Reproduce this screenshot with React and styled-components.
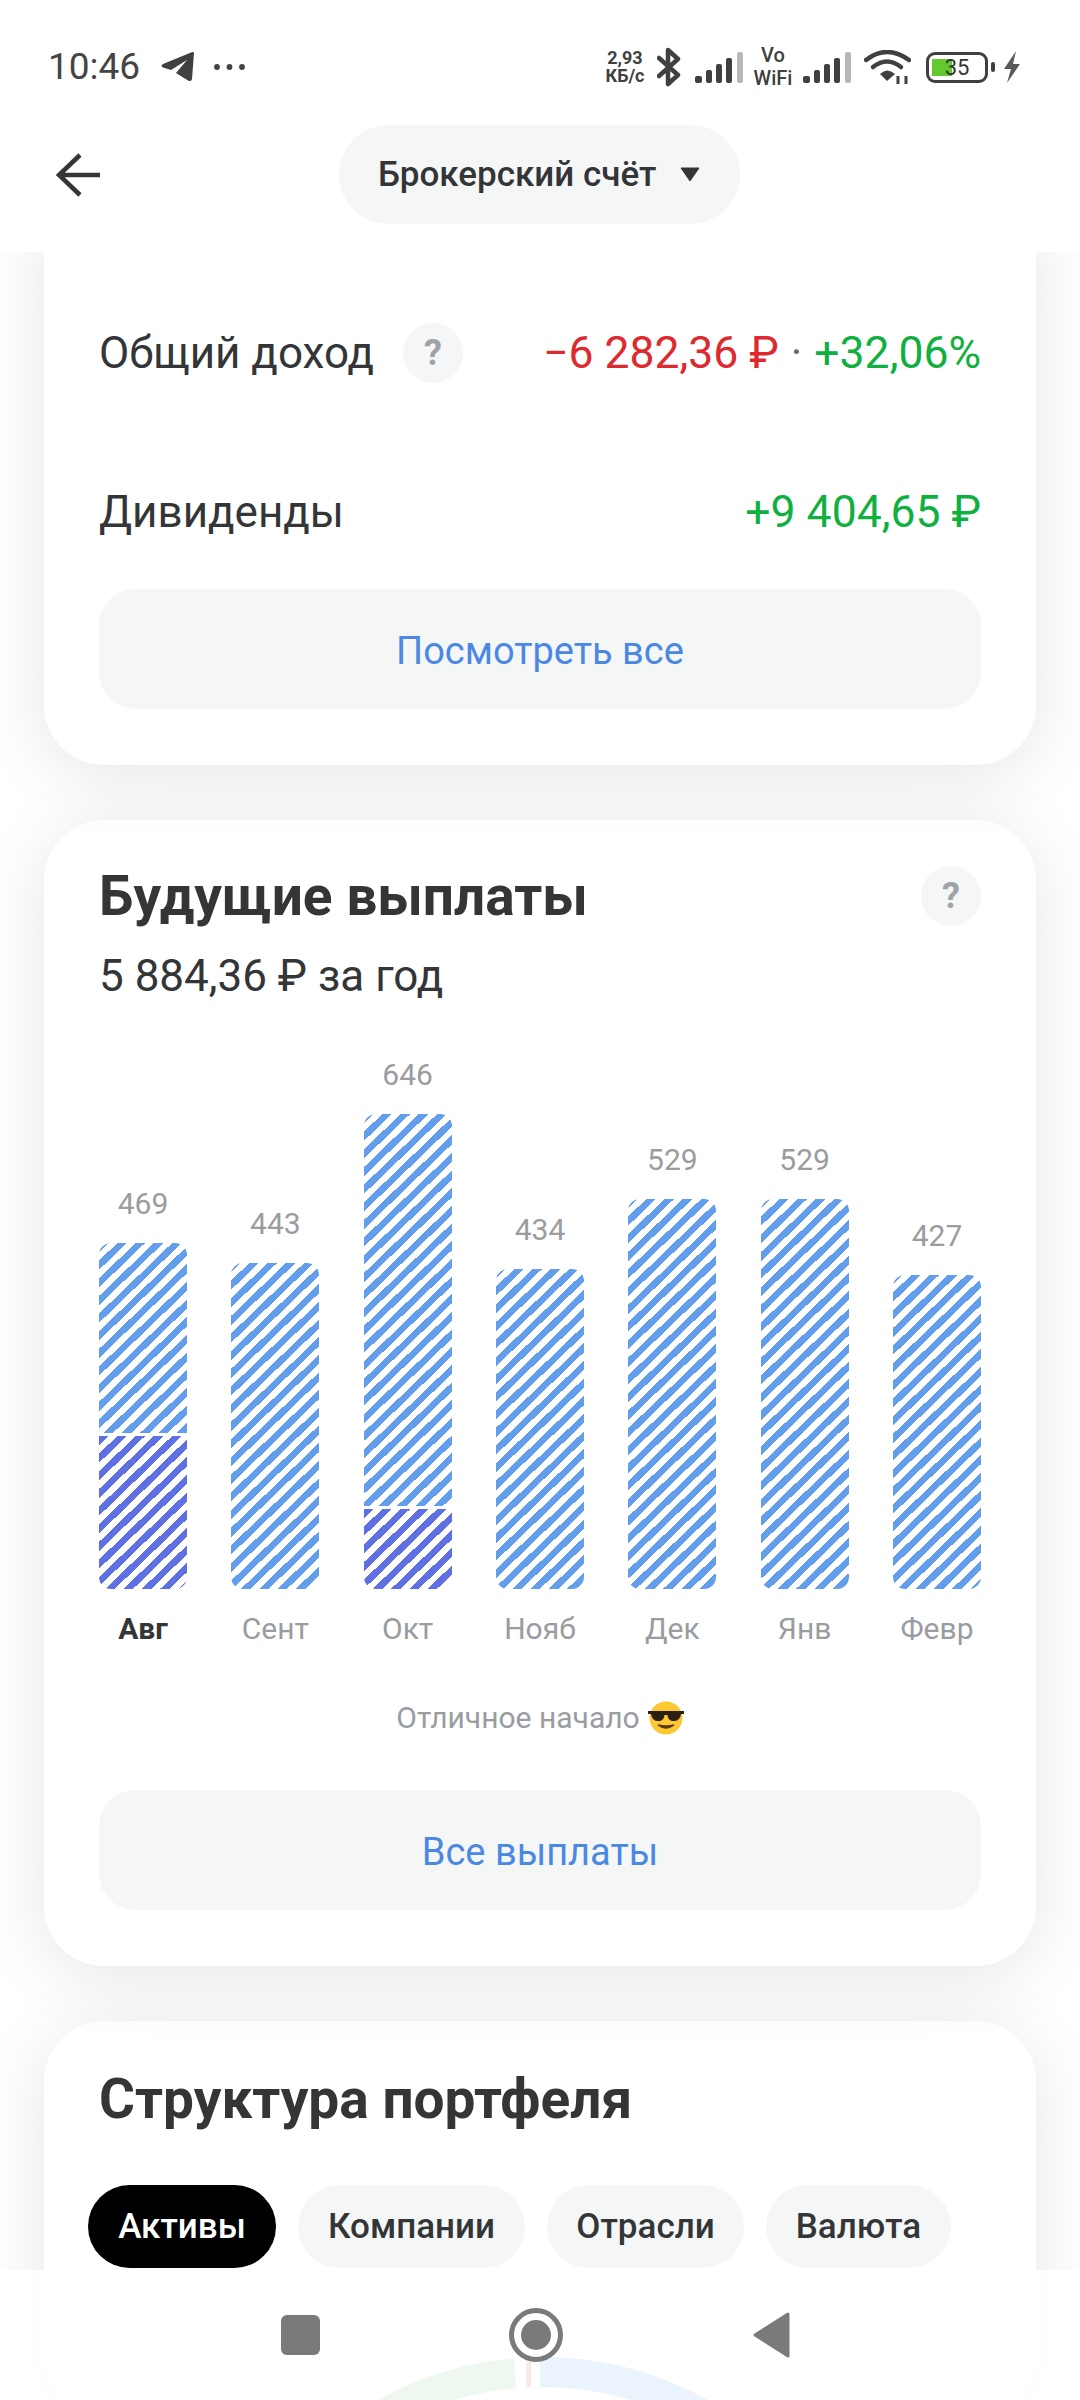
import React from 'react';
import styled, { createGlobalStyle } from 'styled-components';

const GlobalStyle = createGlobalStyle`
    html, body {
        margin: 0;
        padding: 0;
        background: #fff;
    }
    * {
        box-sizing: border-box;
    }
`;

const Screen = styled.div`
    position: relative;
    display: flex;
    flex-direction: column;
    width: 1080px;
    height: 2400px;
    overflow: hidden;
    background: #fff;
    font-family: Roboto, 'Noto Sans', sans-serif;
    color: #333537;
`;

const TopArea = styled.header`
    position: relative;
    z-index: 2;
    flex: none;
    height: 252px;
    background: #fff;
`;

const StatusBar = styled.div`
    display: flex;
    justify-content: space-between;
    align-items: center;
    height: 66px;
    margin-top: 34px;
    padding: 0 59px 0 48px;
`;

const StatusLeft = styled.div`
    display: flex;
    align-items: center;
`;

const Time = styled.span`
    font-size: 37px;
    font-weight: 400;
    color: #444;
    line-height: 40px;
    margin-right: 21px;
`;

const StatusRight = styled.div`
    display: flex;
    align-items: center;
    color: #404040;
`;

const Speed = styled.div`
    display: flex;
    flex-direction: column;
    align-items: center;
    width: 42px;
    margin-right: 11px;
    font-size: 18px;
    font-weight: 700;
    line-height: 18px;
`;

const VoWifi = styled.div`
    display: flex;
    flex-direction: column;
    align-items: center;
    width: 44px;
    margin: 0 8px;
    font-size: 20px;
    font-weight: 500;
    line-height: 23px;
`;

const Battery = styled.div`
    position: relative;
    display: flex;
    align-items: center;
    justify-content: center;
    width: 62px;
    height: 31px;
    margin: 0 3px 0 15px;
    border: 3px solid #404040;
    border-radius: 9px;
    font-size: 22px;
    color: #333;
    background: linear-gradient(90deg, #63c92f 0 20px, transparent 20px) no-repeat 3px 4px / 20px 17px;
`;

const BatteryNub = styled.div`
    width: 4px;
    height: 10px;
    margin-right: 8px;
    border-radius: 2px;
    background: #404040;
`;

const NavRow = styled.div`
    display: grid;
    grid-template-columns: 339px auto;
    align-items: center;
    height: 99px;
    margin-top: 25px;
    padding: 0;
`;

const BackButton = styled.div`
    display: flex;
    padding-left: 56px;
`;

const AccountPill = styled.div`
    display: flex;
    align-items: center;
    justify-content: space-between;
    width: 401px;
    height: 99px;
    padding: 0 40px 0 39px;
    border-radius: 50px;
    background: #f5f7f7;
    font-size: 35px;
    font-weight: 500;
`;

const Scroller = styled.main`
    flex: 1;
    min-height: 0;
    overflow: hidden;
`;

const Track = styled.div`
    position: relative;
    z-index: 0;
    display: flex;
    flex-direction: column;
    gap: 55px;
    margin-top: -60px;
    padding: 0 44px;
`;

const Card = styled.section`
    position: relative;
    z-index: ${(props) => props.$z};
    padding: ${(props) => props.$pad || '46px 55px 56px'};
    border-radius: 60px;
    background: #fff;
    box-shadow: 0 10px 70px rgba(0, 0, 0, 0.1);
`;

const SummaryRow = styled.div`
    display: flex;
    align-items: center;
    justify-content: space-between;
    height: 60px;
    margin-bottom: ${(props) => props.$mb}px;
    font-size: 44px;
`;

const RowLabel = styled.div`
    display: flex;
    align-items: center;
    gap: 29px;
`;

const Amount = styled.span`
    font-size: 44.5px;
    color: ${(props) => props.$color};
`;

const Dot = styled.span`
    margin: 0 12px;
    color: #666;
`;

const HelpBubble = styled.span`
    display: flex;
    align-items: center;
    justify-content: center;
    width: 60px;
    height: 60px;
    border-radius: 50%;
    background: #f5f7f7;
    color: #9fa3a8;
    font-size: 36px;
    font-weight: 700;
`;

const ActionButton = styled.div`
    display: flex;
    align-items: center;
    justify-content: center;
    height: 120px;
    margin-top: ${(props) => props.$mt}px;
    padding-top: 3px;
    border-radius: 36px;
    background: #f5f7f7;
    color: #4b88e4;
    font-size: 38px;
`;

const TitleRow = styled.div`
    display: flex;
    align-items: center;
    justify-content: space-between;
    height: 60px;
`;

const Title = styled.h2`
    margin: 0;
    font-size: 55px;
    font-weight: 700;
    line-height: 60px;
    color: #333537;
`;

const Subtitle = styled.div`
    margin-top: 20px;
    font-size: 44px;
    line-height: 60px;
`;

const Chart = styled.div`
    display: flex;
    justify-content: space-between;
    align-items: flex-end;
    margin-top: 60px;
    height: 523px;
`;

const Column = styled.div`
    display: flex;
    flex-direction: column;
    align-items: stretch;
    width: 88px;
`;

const BarValue = styled.div`
    margin-bottom: 21px;
    text-align: center;
    font-size: 30px;
    line-height: 36px;
    color: #999ca0;
`;

const Bar = styled.div`
    display: flex;
    flex-direction: column;
    gap: 3px;
    overflow: hidden;
    border-radius: 12px;
`;

const Segment = styled.div`
    flex: ${(props) => (props.$paid ? 'none' : 1)};
    background: repeating-linear-gradient(
        136deg,
        ${(props) => (props.$paid ? '#5f70e2' : '#629eec')} 0 6.6px,
        #fff 6.6px 12.7px
    );
`;

const Months = styled.div`
    display: flex;
    justify-content: space-between;
    margin-top: 20px;
`;

const Month = styled.div`
    width: 88px;
    text-align: center;
    white-space: nowrap;
    font-size: 30px;
    line-height: 40px;
    font-weight: ${(props) => (props.$active ? 700 : 400)};
    color: ${(props) => (props.$active ? '#333537' : '#999ca0')};
`;

const Note = styled.div`
    display: flex;
    align-items: center;
    justify-content: center;
    gap: 8px;
    margin-top: 49px;
    font-size: 30px;
    line-height: 40px;
    color: #999ca0;
`;

const Tabs = styled.div`
    display: flex;
    gap: 22px;
    margin: 56px 0 0 -11px;
`;

const Tab = styled.div`
    display: flex;
    align-items: center;
    justify-content: center;
    width: ${(props) => props.$w}px;
    height: 83px;
    border-radius: 42px;
    font-size: 35px;
    font-weight: 500;
    background: ${(props) => (props.$active ? '#000' : '#f5f7f7')};
    color: ${(props) => (props.$active ? '#fff' : '#333537')};
`;

const Donut = styled.svg`
    display: block;
    margin: 87px 0 0 201px;
`;

const SystemNav = styled.nav`
    position: absolute;
    z-index: 3;
    left: 0;
    right: 0;
    bottom: 0;
    display: flex;
    align-items: center;
    height: 130px;
    padding-left: 281px;
    background: rgba(255, 255, 255, 0.9);
`;

const NavSquare = styled.div`
    width: 39px;
    height: 40px;
    border-radius: 6px;
    background: #7a7a7a;
`;

const NavCircle = styled.div`
    display: flex;
    align-items: center;
    justify-content: center;
    width: 54px;
    height: 54px;
    margin: 0 190px 0 189px;
    border: 5px solid #7a7a7a;
    border-radius: 50%;

    &::after {
        content: '';
        width: 30px;
        height: 30px;
        border-radius: 50%;
        background: #7a7a7a;
    }
`;

const bars = [
    { value: 469, month: 'Авг', height: 346, paid: 153, active: true },
    { value: 443, month: 'Сент', height: 326 },
    { value: 646, month: 'Окт', height: 475, paid: 80 },
    { value: 434, month: 'Нояб', height: 320 },
    { value: 529, month: 'Дек', height: 390 },
    { value: 529, month: 'Янв', height: 390 },
    { value: 427, month: 'Февр', height: 314 },
];

const Signal = () => (
    <svg width='48' height='32' viewBox='0 0 48 32'>
        <rect x='0' y='25' width='7' height='7' rx='2' fill='#404040' />
        <rect x='11' y='19' width='6' height='13' rx='2' fill='#404040' />
        <rect x='21' y='13' width='6' height='19' rx='2' fill='#404040' />
        <rect x='31' y='7' width='6' height='25' rx='2' fill='#404040' />
        <rect x='42' y='1' width='6' height='31' rx='2' fill='#b8b8b8' />
    </svg>
);

const App = () => {
    return (
        <Screen>
            <GlobalStyle />
            <TopArea>
                <StatusBar>
                    <StatusLeft>
                        <Time>10:46</Time>
                        <svg width='34' height='30' viewBox='0 0 34 30'>
                            <path
                                d='M33 1 L31 27 Q30.5 30 27 28.5 L15 21 L26 8 L10 18 L2 15.5 Q-1 14 2 12 L30 0.5 Q33 -0.5 33 1 Z'
                                fill='#404040'
                            />
                        </svg>
                        <svg width='33' height='8' viewBox='0 0 33 8' style={{ marginLeft: 18 }}>
                            <circle cx='4' cy='4' r='2.9' fill='#444' />
                            <circle cx='16.5' cy='4' r='2.9' fill='#444' />
                            <circle cx='29' cy='4' r='2.9' fill='#444' />
                        </svg>
                    </StatusLeft>
                    <StatusRight>
                        <Speed>
                            <span>2,93</span>
                            <span>КБ/с</span>
                        </Speed>
                        <svg width='24' height='40' viewBox='0 0 24 40' style={{ marginRight: 14 }}>
                            <path
                                d='M2 11 L21 28 L11 37 V3 L21 12 L2 29'
                                fill='none'
                                stroke='#404040'
                                strokeWidth='4.5'
                                strokeLinejoin='round'
                                strokeLinecap='round'
                            />
                        </svg>
                        <Signal />
                        <VoWifi>
                            <span>Vo</span>
                            <span>WiFi</span>
                        </VoWifi>
                        <Signal />
                        <svg width='47' height='34' viewBox='0 0 47 34' style={{ marginLeft: 13 }}>
                            <g fill='none' stroke='#404040' strokeWidth='4.5' strokeLinecap='round'>
                                <path d='M2 10 Q23 -6 45 10' />
                                <path d='M9 17 Q23 6 37 17' />
                            </g>
                            <path d='M16 24 Q23 17 31 24 L23 31 Z' fill='#404040' />
                            <path d='M34 34 V26 M42 34 V26' stroke='#404040' strokeWidth='3' />
                        </svg>
                        <Battery>35</Battery>
                        <BatteryNub />
                        <svg width='18' height='32' viewBox='0 0 18 32'>
                            <path d='M13 0 L1 18 H8 L4 32 L17 13 H10 Z' fill='#5a5a5a' />
                        </svg>
                    </StatusRight>
                </StatusBar>
                <NavRow>
                    <BackButton>
                        <svg width='44' height='44' viewBox='0 0 44 44'>
                            <path
                                d='M24 2 L3 22 L24 42 M3 22 H44'
                                fill='none'
                                stroke='#333537'
                                strokeWidth='4.5'
                            />
                        </svg>
                    </BackButton>
                    <AccountPill>
                        <span>Брокерский счёт</span>
                        <svg width='20' height='15' viewBox='0 0 20 15'>
                            <path d='M1 1 H19 L10 14 Z' fill='#333537' stroke='#333537' strokeLinejoin='round' />
                        </svg>
                    </AccountPill>
                </NavRow>
            </TopArea>
            <Scroller>
                <Track>
                    <Card $z={3} $pad='131px 55px 56px'>
                        <SummaryRow $mb={99}>
                            <RowLabel>
                                Общий доход
                                <HelpBubble>?</HelpBubble>
                            </RowLabel>
                            <span>
                                <Amount $color='#dc2a2f'>−6 282,36 ₽</Amount>
                                <Dot>·</Dot>
                                <Amount $color='#10b040'>+32,06%</Amount>
                            </span>
                        </SummaryRow>
                        <SummaryRow>
                            <span>Дивиденды</span>
                            <Amount $color='#10b040'>+9 404,65 ₽</Amount>
                        </SummaryRow>
                        <ActionButton $mt={47}>Посмотреть все</ActionButton>
                    </Card>
                    <Card $z={2}>
                        <TitleRow>
                            <Title>Будущие выплаты</Title>
                            <HelpBubble>?</HelpBubble>
                        </TitleRow>
                        <Subtitle>5 884,36 ₽ за год</Subtitle>
                        <Chart>
                            {bars.map((bar) => (
                                <Column key={bar.month}>
                                    <BarValue>{bar.value}</BarValue>
                                    <Bar style={{ height: bar.height }}>
                                        <Segment />
                                        {bar.paid && <Segment $paid style={{ height: bar.paid }} />}
                                    </Bar>
                                </Column>
                            ))}
                        </Chart>
                        <Months>
                            {bars.map((bar) => (
                                <Month key={bar.month} $active={bar.active}>
                                    {bar.month}
                                </Month>
                            ))}
                        </Months>
                        <Note>
                            Отличное начало
                            <svg width='36' height='36' viewBox='0 0 36 36'>
                                <circle cx='18' cy='18' r='16.5' fill='#fdc832' />
                                <path d='M0 11 H36 V14 L33 14 Q32 22 24 21 Q20 20 19.5 15 H16.5 Q16 20 12 21 Q4 22 3 14 L0 14 Z' fill='#2b2016' />
                                <path d='M10 25 Q18 31 26 25 Q18 27 10 25 Z' fill='#5a3a14' stroke='#5a3a14' strokeWidth='1.5' />
                            </svg>
                        </Note>
                        <ActionButton $mt={52}>Все выплаты</ActionButton>
                    </Card>
                    <Card $z={1} $pad='48px 55px 0'>
                        <Title>Структура портфеля</Title>
                        <Tabs>
                            <Tab $w={188} $active>
                                Активы
                            </Tab>
                            <Tab $w={227}>Компании</Tab>
                            <Tab $w={197}>Отрасли</Tab>
                            <Tab $w={185}>Валюта</Tab>
                        </Tabs>
                        <Donut width='500' height='60' viewBox='0 0 500 60'>
                            <path d='M43 86.4 A323 323 0 0 1 215 18.2' fill='none' stroke='#55b969' strokeWidth='30' />
                            <path d='M240 17 A323 323 0 0 1 443 86.4' fill='none' stroke='#3787eb' strokeWidth='30' />
                            <path d='M228.5 7 V32' stroke='#d02020' strokeWidth='5' />
                        </Donut>
                    </Card>
                </Track>
            </Scroller>
            <SystemNav>
                <NavSquare />
                <NavCircle />
                <svg width='37' height='46' viewBox='0 0 37 46'>
                    <path d='M35 2 V44 L2 23 Z' fill='#7a7a7a' stroke='#7a7a7a' strokeWidth='3' strokeLinejoin='round' />
                </svg>
            </SystemNav>
        </Screen>
    );
};

export default App;
